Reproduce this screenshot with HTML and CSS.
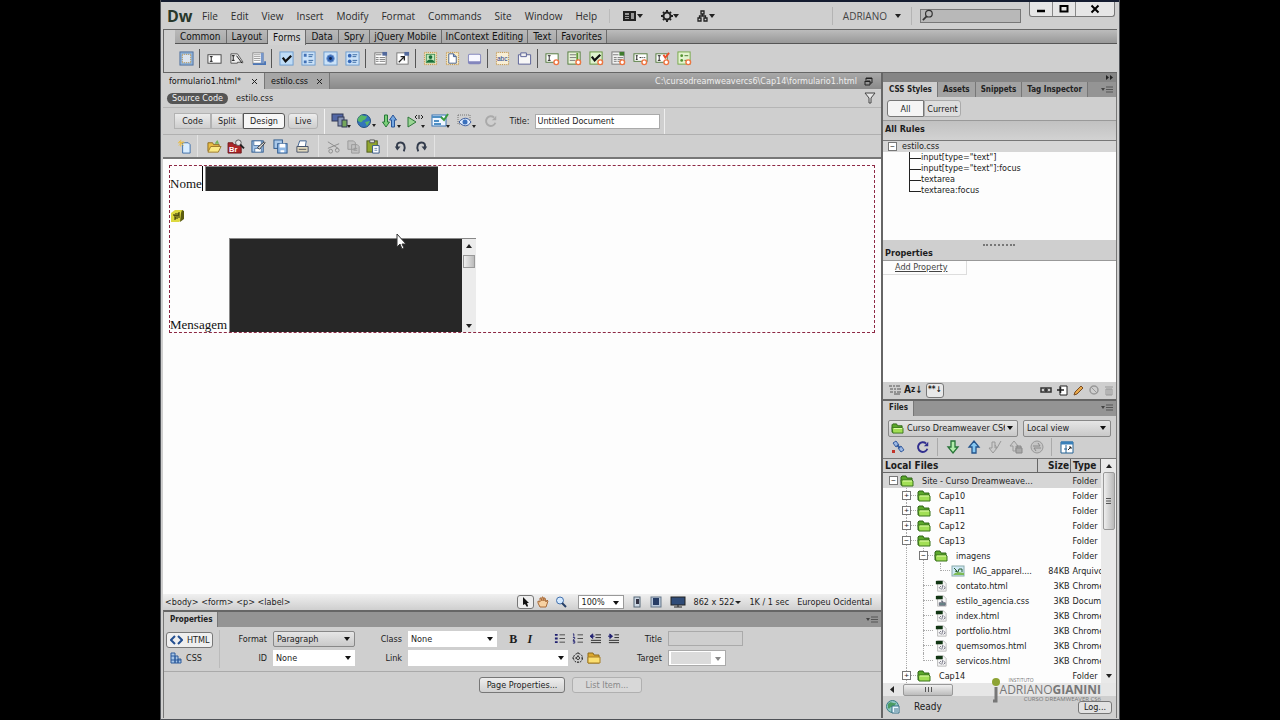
FILE: index.html
```html
<!DOCTYPE html>
<html lang="en">
<head>
<meta charset="utf-8">
<title>Dreamweaver - formulario1.html</title>
<link rel="stylesheet" href="styles.css">
</head>
<body>
<svg class="defs" aria-hidden="true">
  <symbol id="form" viewBox="0 0 16 16"><rect x="1" y="1" width="14" height="14" fill="#8fb4dc" stroke="#4f6f9c"/><rect x="3.500" y="3.500" width="9" height="9" fill="#dce4ee" stroke="#b48a3c" stroke-dasharray="1 1"/></symbol>
  <symbol id="field" viewBox="0 0 16 16"><rect x="1" y="4" width="14" height="9" fill="#fff" stroke="#444"/><path d="M3 6h3M3 11h3M4.500 6v5" stroke="#111" fill="none"/></symbol>
  <symbol id="hidden" viewBox="0 0 16 16"><path d="M2 3h7l6 9H9v1H2z" fill="#eee" stroke="#555"/><path d="M3 5h3M3 10h3M4.500 5v5M8 5l6 8" stroke="#111" fill="none"/></symbol>
  <symbol id="area" viewBox="0 0 16 16"><rect x="2" y="2" width="11" height="11" fill="#fff" stroke="#888"/><path d="M3 4h7M3 6h7M3 8h7M3 10h7" stroke="#9a9a9a"/><path d="M10.500 2h3v11h-3z" fill="#7797cb"/><path d="M2 14h13v-3" stroke="#4a75b7" stroke-width="2" fill="none"/></symbol>
  <symbol id="check" viewBox="0 0 16 16"><rect x="1" y="1" width="14" height="14" fill="#bfdcf6" stroke="#6b9bcd"/><path d="M4 7l3 4 6-6" stroke="#111" stroke-width="2.400" fill="none"/></symbol>
  <symbol id="checks" viewBox="0 0 16 16"><rect x="1" y="1" width="14" height="14" fill="#cbe2f8" stroke="#6b9bcd"/><path d="M3 3h3v3H3zM3 10h3v3H3z" fill="#4170b5"/><path d="M8 4h5M8 6h4M8 10h5M8 12h4" stroke="#3565a0"/></symbol>
  <symbol id="radio" viewBox="0 0 16 16"><rect x="1" y="1" width="14" height="14" fill="#cbe2f8" stroke="#6b9bcd"/><circle cx="8" cy="8" r="4" fill="#3567b6" stroke="#6f94cc"/><circle cx="8" cy="8" r="1.500" fill="#0d2454"/></symbol>
  <symbol id="radios" viewBox="0 0 16 16"><rect x="1" y="1" width="14" height="14" fill="#cbe2f8" stroke="#6b9bcd"/><circle cx="5" cy="5" r="2" fill="#3567b6"/><circle cx="5" cy="11" r="2" fill="#3567b6"/><path d="M8 4h5M8 6h4M8 10h5M8 12h4" stroke="#3565a0"/></symbol>
  <symbol id="menu" viewBox="0 0 16 16"><rect x="2" y="2" width="12" height="12" fill="#fff" stroke="#777"/><path d="M10 1h5v4h-5z" fill="#52699c"/><path d="M3 4h6M3 7h3M7 7h6M3 9h3M7 9h6M3 11h3M7 11h6" stroke="#777"/></symbol>
  <symbol id="jump" viewBox="0 0 16 16"><rect x="2" y="2" width="12" height="12" fill="#fff" stroke="#777"/><path d="M10 1h5v4h-5z" fill="#52699c"/><path d="M4 12l6-6M6 6h4v4" stroke="#222" stroke-width="1.400" fill="none"/></symbol>
  <symbol id="image" viewBox="0 0 16 16"><rect x="1.500" y="1.500" width="13" height="13" fill="#f6e8c0" stroke="#be8a35" stroke-dasharray="1 1"/><rect x="3.500" y="3.500" width="9" height="9" fill="#c4e8bd" stroke="#3f8f58"/><circle cx="8" cy="6.500" r="2" fill="#176c35"/><path d="M4 12c0-4 8-4 8 0z" fill="#18723a"/></symbol>
  <symbol id="file" viewBox="0 0 16 16"><rect x="1.500" y="1.500" width="13" height="13" fill="#f6e8c0" stroke="#be8a35" stroke-dasharray="1 1"/><path d="M4 3h5l3 3v7H4z" fill="#fff" stroke="#46618e"/><path d="M9 3v3h3" fill="#89a6d5" stroke="#46618e"/></symbol>
  <symbol id="button" viewBox="0 0 16 16"><rect x="1" y="3" width="14" height="11" rx="2" fill="#8386bd"/><rect x="2" y="4" width="12" height="7" rx="1" fill="#f7f7ff"/></symbol>
  <symbol id="fieldset" viewBox="0 0 16 16"><path d="M1.500 4h13v10h-13z" fill="#f7f7f7" stroke="#596096"/><path d="M4 2h6v4H4z" fill="#eee" stroke="#596096"/></symbol>
  <symbol id="spfield" viewBox="0 0 16 16"><rect x="1" y="3" width="13" height="9" fill="#fff" stroke="#51793a"/><path d="M3 5h3M3 10h3M4.500 5v5" stroke="#222"/><circle cx="12" cy="12" r="2.500" fill="#fff" stroke="#ee7542" stroke-width="1.500"/></symbol>
  <symbol id="sparea" viewBox="0 0 16 16"><rect x="1" y="1" width="13" height="13" fill="#eaf4db" stroke="#51793a"/><path d="M3 4h7M3 7h7M3 10h6" stroke="#777"/><path d="M11 2v10" stroke="#609a32" stroke-width="2"/><circle cx="12" cy="12" r="2.500" fill="#fff" stroke="#ee7542" stroke-width="1.500"/></symbol>
  <symbol id="spcheck" viewBox="0 0 16 16"><rect x="1" y="1" width="13" height="13" fill="#dff2ce" stroke="#65933f"/><path d="M3 6l3 4 6-6" stroke="#111" stroke-width="2.400" fill="none"/><circle cx="12" cy="12" r="2.500" fill="#fff" stroke="#ee7542" stroke-width="1.500"/></symbol>
  <symbol id="spselect" viewBox="0 0 16 16"><rect x="1" y="1" width="13" height="13" fill="#f2f2f2" stroke="#777"/><path d="M9 1h5v4H9z" fill="#3f7a2d"/><path d="M2 4h6M3 7h3M7 7h6M3 9h3M7 9h5M3 11h3M7 11h3" stroke="#777"/><circle cx="12" cy="12" r="2.500" fill="#fff" stroke="#ee7542" stroke-width="1.500"/></symbol>
  <symbol id="sppass" viewBox="0 0 16 16"><rect x="1" y="3" width="14" height="8" fill="#fff" stroke="#51793a"/><path d="M3 5h2M3 9h2M4 5v4M7 7h2M10 7h1M12 7h1" stroke="#222"/><circle cx="12" cy="12" r="2.500" fill="#fff" stroke="#ee7542" stroke-width="1.500"/></symbol>
  <symbol id="spconf" viewBox="0 0 16 16"><rect x="1" y="3" width="12" height="9" fill="#fff" stroke="#51793a"/><path d="M3 5h3M3 10h3M4.500 5v5" stroke="#222"/><path d="M9 4l2 3 4-5" stroke="#ed4e2a" stroke-width="2" fill="none"/><circle cx="12" cy="12" r="2.500" fill="#fff" stroke="#ee7542" stroke-width="1.500"/></symbol>
  <symbol id="spradio" viewBox="0 0 16 16"><rect x="1" y="1" width="13" height="13" fill="#e4f3cf" stroke="#74a647"/><circle cx="5" cy="5" r="1.500" fill="#549332"/><circle cx="5" cy="10" r="1.500" fill="#549332"/><path d="M8 5h4M8 10h3" stroke="#467a28"/><circle cx="12" cy="12" r="2.500" fill="#fff" stroke="#ee7542" stroke-width="1.500"/></symbol>
  <symbol id="multi" viewBox="0 0 20 16"><rect x="1" y="1" width="11" height="7" fill="#5267a5" stroke="#303957"/><rect x="7" y="4" width="6" height="9" fill="#8b98ba" stroke="#303957"/><rect x="11" y="7" width="5" height="7" fill="#75a65b" stroke="#303957"/><path d="M16 12h4l-2 3z" fill="#222"/></symbol>
  <symbol id="globe" viewBox="0 0 20 16"><circle cx="8" cy="8" r="6.500" fill="#3375bb" stroke="#245080"/><path d="M3 4c3-4 5 0 7-1s0 4-2 4-1 3-4 2-3-2-1-5M9 9l5-1-3 5z" fill="#58b765"/><path d="M16 11h4l-2 3z" fill="#222"/></symbol>
  <symbol id="updown" viewBox="0 0 20 16"><path d="M3.500 2h3v7h2l-3.500 5-3.500-5h2z" fill="#7bcf78" stroke="#277739"/><path d="M10.500 14h3V7h2L12 2 8.500 7h2z" fill="#77a8e0" stroke="#285599"/><path d="M16 12h4l-2 3z" fill="#222"/></symbol>
  <symbol id="valid" viewBox="0 0 20 16"><path d="M2 4l8 5-8 5z" fill="#9bd694" stroke="#2d7539"/><path d="M11 2l-2 2 2 2M15 2l2 2-2 2M13 2v4" stroke="#222" fill="none"/><path d="M15 12h4l-2 3z" fill="#222"/></symbol>
  <symbol id="browser" viewBox="0 0 20 16"><rect x="1" y="2" width="14" height="11" fill="#eef6ff" stroke="#3975b3"/><path d="M1 4h10M3 8h5M3 11h7" stroke="#4f90c5" stroke-width="2"/><path d="M10 4l3 3 4-6" stroke="#3a9a3f" stroke-width="2" fill="none"/><path d="M15 12h4l-2 3z" fill="#222"/></symbol>
  <symbol id="eye" viewBox="0 0 20 16"><path d="M2 2h12v5M2 2v9h3" stroke="#777" stroke-dasharray="1 1" fill="none"/><path d="M3 9c4-5 9-5 12 0-3 5-8 5-12 0z" fill="#dceafd" stroke="#3b5c9d"/><circle cx="9" cy="9" r="2.500" fill="#3970bd"/><path d="M16 12h4l-2 3z" fill="#222"/></symbol>
  <symbol id="reload" viewBox="0 0 16 16"><path d="M13 10a5.500 5.500 0 1 1-1.500-6" stroke="currentColor" stroke-width="2.200" fill="none"/><path d="M9 7h5V2z" fill="currentColor"/></symbol>
  <symbol id="new" viewBox="0 0 16 16"><path d="M6 4h6l2 2v9H6z" fill="#d9edff" stroke="#3e6eaa"/><path d="M4 1v7M1 4h7M2 2l5 5M7 2L2 7" stroke="#eabc42"/></symbol>
  <symbol id="open" viewBox="0 0 16 16"><path d="M1 13V4h5l1 2h6v2" fill="#e9bd44" stroke="#8c6a1d"/><path d="M4 8h11l-3 6H1z" fill="#fbea86" stroke="#9c782b"/><path d="M8 5l3-4 2 4z" fill="#74b459"/></symbol>
  <symbol id="save" viewBox="0 0 16 16"><rect x="1" y="2" width="12" height="12" fill="#a9c8e9" stroke="#29568c"/><path d="M3 2h8v5H3zM4 10h7v4H4z" fill="#fff" stroke="#537ba9"/><path d="M7 9l7-6 1 1-6 7z" fill="#ddd" stroke="#333"/></symbol>
  <symbol id="saveall" viewBox="0 0 16 16"><rect x="1" y="1" width="9" height="9" fill="#a9c8e9" stroke="#29568c"/><rect x="5" y="5" width="10" height="10" fill="#90b8e5" stroke="#29568c"/><path d="M7 5h6v4H7zM8 12h4v2H8z" fill="#fff"/></symbol>
  <symbol id="print" viewBox="0 0 16 16"><path d="M5 2h7l-1 6H3z" fill="#fff" stroke="#3f6290"/><path d="M2 8h12v6H2z" fill="#e0d8bd" stroke="#445068"/><path d="M4 11h8" stroke="#555"/></symbol>
  <symbol id="cut" viewBox="0 0 16 16"><path d="M2 3l11 7M2 10l12-5" stroke="#8b8b8b"/><circle cx="12" cy="12" r="2" fill="none" stroke="#8b8b8b"/><circle cx="5" cy="13" r="2" fill="none" stroke="#8b8b8b"/></symbol>
  <symbol id="copy" viewBox="0 0 16 16"><path d="M2 2h6l2 2v7H2zM6 6h6l2 2v7H6z" fill="#c2c2c2" stroke="#999"/><path d="M8 10h4M8 12h4" stroke="#999"/></symbol>
  <symbol id="paste" viewBox="0 0 16 16"><rect x="1" y="2" width="11" height="12" fill="#91a62f" stroke="#4d5b1e"/><path d="M4 1h5v3H4z" fill="#ddd" stroke="#555"/><path d="M7 7h7v8H7z" fill="#fff" stroke="#345888"/><path d="M9 10h3M9 12h3" stroke="#6688b0"/></symbol>
  <symbol id="undo" viewBox="0 0 16 16"><path d="M12 14C15 8 12 3 8 3S3 6 4 9" stroke="#333c4c" stroke-width="2.400" fill="none"/><path d="M1 8h7l-4 5z" fill="#333c4c"/></symbol>
  <symbol id="redo" viewBox="0 0 16 16"><path d="M4 14C1 8 4 3 8 3s5 3 4 6" stroke="#333c4c" stroke-width="2.400" fill="none"/><path d="M8 8h7l-3 5z" fill="#333c4c"/></symbol>
  <symbol id="folder" viewBox="0 0 14 12"><path d="M1 10V2l1-1h4l1 2h5v7z" fill="#5ba82a" stroke="#2f6517"/><path d="M2 11L1 5h11l1 1v5z" fill="#a2df55" stroke="#38731b"/><path d="M3 6h9" stroke="#e2ffab"/></symbol>
  <symbol id="doc" viewBox="0 0 14 14"><path d="M3 1h7l3 3v9H3z" fill="#f5f5f5" stroke="#b4b4b4"/><path d="M1 1h8v4H1z" fill="#103512"/><path d="M7 7L5 9l2 2M10 7l2 2-2 2M9 6l-1 5" stroke="#667" fill="none"/></symbol>
  <symbol id="css" viewBox="0 0 14 14"><path d="M3 1h7l3 3v9H3z" fill="#f5f5f5" stroke="#b4b4b4"/><path d="M1 1h8v4H1z" fill="#103512"/><path d="M5 9h7v3H5zM7 7h2v2" fill="#688" stroke="#667"/></symbol>
  <symbol id="pic" viewBox="0 0 14 12"><rect x="1" y="1" width="12" height="10" fill="#cfe9f5" stroke="#8aa"/><path d="M2 10l2-2 3-1 6 1v2z" fill="#7dbb56"/><path d="M3 3l3 3M4 6l3 1 1-3h3v3" stroke="#285b31" fill="none"/></symbol>
  <symbol id="panel" viewBox="0 0 12 8"><path d="M0 2h4L2 5z" fill="#444"/><path d="M5 1h7M5 3.500h7M5 6h7" stroke="#555"/></symbol>
  <symbol id="lens" viewBox="0 0 14 14"><circle cx="8.500" cy="5" r="3.600" fill="none" stroke="#333" stroke-width="1.300"/><path d="M6 8l-4 4" stroke="#333" stroke-width="1.800"/></symbol>
  <symbol id="ul" viewBox="0 0 12 12"><path d="M1 1h3v2H1zM1 5h3v2H1zM1 9h3v2H1z" fill="#1f1f70"/><path d="M6 2h6M6 6h6M6 10h6" stroke="#444"/></symbol>
  <symbol id="ol" viewBox="0 0 12 12"><path d="M1 1h1v3M1 5h2v1L1 8h2M1 9h2v2H1" stroke="#1f1f70" fill="none"/><path d="M6 2h6M6 6h6M6 10h6" stroke="#444"/></symbol>
  <symbol id="outdent" viewBox="0 0 12 12"><path d="M6 2h6M6 5h6M1 8h11M1 10.500h11" stroke="#222"/><path d="M0 3.500L3 1v5zM3 3.500h2" fill="#1f1f70" stroke="#1f1f70"/></symbol>
  <symbol id="indent" viewBox="0 0 12 12"><path d="M7 2h5M7 5h5M1 8h11M1 10.500h11" stroke="#222"/><path d="M5 3.500L2 1v5zM0 3.500h2" fill="#1f1f70" stroke="#1f1f70"/></symbol>
  <symbol id="down" viewBox="0 0 14 14"><path d="M5 1h4v6h3l-5 6-5-6h3z" fill="#b1edaa" stroke="#287438" stroke-width="1.300"/></symbol>
  <symbol id="up" viewBox="0 0 14 14"><path d="M5 13h4V7h3L7 1 2 7h3z" fill="#86c8f2" stroke="#24548c" stroke-width="1.300"/></symbol>
</svg>

<div class="app">
  <header class="menubar">
    <strong class="logo">Dw</strong>
    <nav class="menus"><a href="#">File</a><a href="#">Edit</a><a href="#">View</a><a href="#">Insert</a><a href="#">Modify</a><a href="#">Format</a><a href="#">Commands</a><a href="#">Site</a><a href="#">Window</a><a href="#">Help</a></nav>
    <div class="apptools">
      <button aria-label="Layout"><svg width="20" height="12" viewBox="0 0 20 12"><path d="M0 1h13v10H0z" fill="#222"/><path d="M2 3h4v2H2zM2 6h4v1H2zM2 8h4v1H2zM8 3h3v6H8z" fill="#999"/><path d="M14 4h6l-3 4z" fill="#222"/></svg></button>
      <button aria-label="Extend"><svg width="18" height="12" viewBox="0 0 18 12"><circle cx="6" cy="6" r="3.500" fill="none" stroke="#222" stroke-width="2"/><path d="M6 0v2M6 10v2M0 6h2M10 6h2M2 2l1 1M9 9l1 1M2 10l1-1M9 3l1-1" stroke="#222" stroke-width="2"/><path d="M12 4h6l-3 4z" fill="#222"/></svg></button>
      <button aria-label="Site"><svg width="18" height="12" viewBox="0 0 18 12"><path d="M4 1h3v3H4zM1 8h3v3H1zM7 8h3v3H7zM5.500 4v2M2.500 8V6h6v2" fill="none" stroke="#222" stroke-width="1.300"/><path d="M12 4h6l-3 4z" fill="#222"/></svg></button>
    </div>
    <button class="user">ADRIANO <i class="tri"></i></button>
    <label class="search"><svg width="13" height="13"><use href="#lens"/></svg><input type="search" aria-label="Search"></label>
    <div class="winbtns">
      <button aria-label="Minimize"><svg width="10" height="10" viewBox="0 0 10 10"><path d="M1 7h8" stroke="#000" stroke-width="2.500"/></svg></button>
      <button aria-label="Maximize"><svg width="10" height="10" viewBox="0 0 10 10"><path d="M1.500 2h7v5.500h-7z" fill="none" stroke="#000" stroke-width="2"/></svg></button>
      <button class="close" aria-label="Close"><svg width="10" height="10" viewBox="0 0 10 10"><path d="M1.500 1.500l7 7M8.500 1.500l-7 7" stroke="#000" stroke-width="2"/></svg></button>
    </div>
  </header>

  <section class="insert">
    <div class="instabs"><button>Common</button><button>Layout</button><button class="on">Forms</button><button>Data</button><button>Spry</button><button>jQuery Mobile</button><button>InContext Editing</button><button>Text</button><button>Favorites</button></div>
    <div class="insicons">
      <button aria-label="Form"><svg><use href="#form"/></svg></button><i></i>
      <button aria-label="Text Field"><svg><use href="#field"/></svg></button><button aria-label="Hidden Field"><svg><use href="#hidden"/></svg></button><button aria-label="Textarea"><svg><use href="#area"/></svg></button><i></i>
      <button aria-label="Checkbox"><svg><use href="#check"/></svg></button><button aria-label="Checkbox Group"><svg><use href="#checks"/></svg></button><button aria-label="Radio"><svg><use href="#radio"/></svg></button><button aria-label="Radio Group"><svg><use href="#radios"/></svg></button><i></i>
      <button aria-label="Select"><svg><use href="#menu"/></svg></button><button aria-label="Jump Menu"><svg><use href="#jump"/></svg></button><i></i>
      <button aria-label="Image Field"><svg><use href="#image"/></svg></button><button aria-label="File Field"><svg><use href="#file"/></svg></button><button aria-label="Button"><svg><use href="#button"/></svg></button><i></i>
      <button aria-label="Label"><svg viewBox="0 0 16 16"><rect x="1.500" y="1.500" width="13" height="13" fill="#f8eed5" stroke="#be8a35" stroke-dasharray="1 1"/><text x="2" y="11" class="tiny">abc</text></svg></button><button aria-label="Fieldset"><svg><use href="#fieldset"/></svg></button><i></i>
      <button aria-label="Spry Text"><svg><use href="#spfield"/></svg></button><button aria-label="Spry Textarea"><svg><use href="#sparea"/></svg></button><button aria-label="Spry Checkbox"><svg><use href="#spcheck"/></svg></button><button aria-label="Spry Select"><svg><use href="#spselect"/></svg></button><button aria-label="Spry Password"><svg><use href="#sppass"/></svg></button><button aria-label="Spry Confirm"><svg><use href="#spconf"/></svg></button><button aria-label="Spry Radio"><svg><use href="#spradio"/></svg></button>
    </div>
  </section>

  <div class="work">
    <main class="editor">
      <div class="doctabs">
        <button class="on">formulario1.html* <svg width="7" height="7" viewBox="0 0 7 7"><path d="M1 1l5 5M6 1L1 6" stroke="#222"/></svg></button>
        <button>estilo.css <svg width="7" height="7" viewBox="0 0 7 7"><path d="M1 1l5 5M6 1L1 6" stroke="#222"/></svg></button>
        <span class="path">C:\cursodreamweavercs6\Cap14\formulario1.html</span>
        <svg width="9" height="9" viewBox="0 0 9 9"><path d="M2 3V1h6v5H6M1 4h5v4H1zM1 4.500h5M2 1.500h6" fill="none" stroke="#222"/></svg>
      </div>
      <div class="related"><button class="pill">Source Code</button><button>estilo.css</button><svg width="12" height="12" viewBox="0 0 12 12"><path d="M1 1h10L7 6v5H5V6z" fill="#e5e5e5" stroke="#444"/></svg></div>
      <div class="docbar">
        <div class="modes"><button>Code</button><button>Split</button><button class="on">Design</button></div><button class="live">Live</button>
        <div class="docicons"><button aria-label="Multiscreen"><svg><use href="#multi"/></svg></button><button aria-label="Preview"><svg><use href="#globe"/></svg></button><button aria-label="File Management"><svg><use href="#updown"/></svg></button><button aria-label="Validate"><svg><use href="#valid"/></svg></button><button aria-label="Browser Check"><svg><use href="#browser"/></svg></button><button aria-label="Visual Aids"><svg><use href="#eye"/></svg></button><button class="faded" aria-label="Refresh"><svg><use href="#reload"/></svg></button></div>
        <label class="doctitle">Title: <input type="text" value="Untitled Document"></label>
      </div>
      <div class="stdbar">
        <div class="g1"><button aria-label="New"><svg><use href="#new"/></svg></button></div>
        <div class="g2"><button aria-label="Open"><svg><use href="#open"/></svg></button><button aria-label="Browse in Bridge"><svg class="wide" viewBox="0 0 20 16"><path d="M1 4h5l1 2h8v9H1z" fill="#ad2528" stroke="#6d171b"/><text x="2" y="14" class="br">Br</text><circle cx="12" cy="4" r="3" fill="#e6e6e6" stroke="#555"/><path d="M14 6l4 4" stroke="#222" stroke-width="2"/></svg></button><button aria-label="Save"><svg><use href="#save"/></svg></button><button aria-label="Save All"><svg><use href="#saveall"/></svg></button><button aria-label="Print"><svg><use href="#print"/></svg></button></div>
        <div class="g3"><button aria-label="Cut"><svg><use href="#cut"/></svg></button><button aria-label="Copy"><svg><use href="#copy"/></svg></button><button aria-label="Paste"><svg><use href="#paste"/></svg></button></div>
        <div class="g4"><button aria-label="Undo"><svg><use href="#undo"/></svg></button><button aria-label="Redo"><svg><use href="#redo"/></svg></button></div>
      </div>
      <div class="canvas">
        <form class="design">
          <p class="line"><label for="nome">Nome</label><span class="caret"></span><input id="nome" type="text"></p>
          <svg class="script" width="14" height="13" viewBox="0 0 14 13"><path d="M1 4l4-3h8v9l-4 3H1z" fill="#ddd940"/><path d="M12 1l2 1v8l-4 3 1-9z" fill="#5b5c10"/><path d="M3 6h2v5M6 4v3h2V4M9 3v6M5 9h3" stroke="#252500" fill="none"/></svg>
          <p class="line msg"><label for="msg">Mensagem</label><span class="box"><textarea id="msg"></textarea><span class="tscroll"><i class="tri upw"></i><b></b><i class="tri"></i></span></span></p>
        </form>
        <svg class="pointer" width="12" height="18" viewBox="0 0 12 18"><path d="M1 1v13l3-3 2 5 2-1-2-4h4z" fill="#fff" stroke="#333"/></svg>
      </div>
      <div class="status">
        <nav><a href="#">&lt;body&gt;</a> <a href="#">&lt;form&gt;</a> <a href="#">&lt;p&gt;</a> <a href="#">&lt;label&gt;</a></nav>
        <div class="sttools">
          <button class="on" aria-label="Select"><svg width="10" height="12" viewBox="0 0 10 12"><path d="M3 1v8l2-1 2 3 1-1-1-3h2z" fill="#111"/></svg></button>
          <button aria-label="Hand"><svg width="12" height="12" viewBox="0 0 12 12"><path d="M3 11L1 7V5l2 1V2h1l1 3V1h1l1 4V2h1l1 4 1-2 1 1-2 6z" fill="#f7d1a2" stroke="#a96b38"/></svg></button>
          <button aria-label="Zoom"><svg width="12" height="12" viewBox="0 0 12 12"><circle cx="5" cy="4.500" r="3.500" fill="#d5eaff" stroke="#416fac"/><path d="M7 7l4 4" stroke="#263f66" stroke-width="2"/></svg></button>
        </div>
        <span class="sel zoom"><select aria-label="Zoom level"><option>100%</option></select></span>
        <div class="screens"><button aria-label="Phone"><svg width="10" height="12" viewBox="0 0 10 12"><rect x="2" y="1" width="6" height="10" fill="#cdd8e4" stroke="#567"/><path d="M4 3h3v5H4z" fill="#334"/></svg></button><button aria-label="Tablet"><svg width="12" height="12" viewBox="0 0 12 12"><rect x="1" y="1" width="10" height="10" fill="#b8c7da" stroke="#678"/><rect x="3" y="2" width="6" height="7" fill="#263c65"/></svg></button><button aria-label="Desktop"><svg width="16" height="12" viewBox="0 0 16 12"><rect x="1" y="1" width="14" height="8" fill="#304c78" stroke="#222"/><path d="M4 11h8M8 9v2" stroke="#222"/></svg></button></div>
        <span>862 x 522<i class="tri s"></i></span><span>1K / 1 sec</span><span>Europeu Ocidental</span>
      </div>

      <section class="props">
        <div class="ptabs"><button class="on">Properties</button><svg width="12" height="8"><use href="#panel"/></svg></div>
        <div class="pbody">
          <div class="pmode">
            <button class="on"><svg width="13" height="10" viewBox="0 0 13 10"><path d="M5 1L1 5l4 4M8 1l4 4-4 4" stroke="#234f91" stroke-width="2" fill="none"/></svg>HTML</button>
            <button><svg width="12" height="12" viewBox="0 0 12 12"><path d="M1 1h4v10H1zM5 4h3v7H5zM8 7h3v4H8zM1 4h4M1 8h10" fill="#a6c5e7" stroke="#2d5b9b"/></svg>CSS</button>
          </div>
          <div class="pg a"><label for="fmt">Format</label><span class="sel gray"><select id="fmt"><option>Paragraph</option></select></span><label for="pid">ID</label><span class="sel"><select id="pid"><option>None</option></select></span></div>
          <div class="pg b"><label for="cls">Class</label>
            <div class="cell"><span class="sel cls"><select id="cls"><option>None</option></select></span><button class="serif"><b>B</b></button><button class="serif"><b><i>I</i></b></button><span class="lists"><button aria-label="Unordered List"><svg><use href="#ul"/></svg></button><button aria-label="Ordered List"><svg><use href="#ol"/></svg></button><button aria-label="Outdent"><svg><use href="#outdent"/></svg></button><button aria-label="Indent"><svg><use href="#indent"/></svg></button></span></div>
            <label for="lnk">Link</label>
            <div class="cell"><span class="sel lnk"><input id="lnk" type="text"></span><button class="tgt" aria-label="Point to File"><svg width="12" height="12" viewBox="0 0 12 12"><circle cx="6" cy="6" r="4.500" fill="none" stroke="#222" stroke-dasharray="2 1"/><path d="M6 0v12M0 6h12" stroke="#444" stroke-dasharray="2 1"/><circle cx="6" cy="6" r="1.500" fill="#eee" stroke="#333"/></svg></button><button aria-label="Browse for File"><svg width="14" height="12" viewBox="0 0 14 12"><path d="M1 1h5l1 2h5v8H1z" fill="#dca82f" stroke="#8c6a1d"/><path d="M1 5h12v6H1z" fill="#fbdf70" stroke="#a87f24"/></svg></button></div>
          </div>
          <div class="pg c"><label for="ttl">Title</label><input id="ttl" type="text" disabled><label for="tgt">Target</label><span class="sel dis"><select id="tgt" disabled><option></option></select></span></div>
        </div>
        <div class="pfoot"><button>Page Properties...</button><button disabled>List Item...</button></div>
      </section>
    </main>

    <aside class="side">
      <div class="dockhead"><svg width="7" height="5" viewBox="0 0 7 5"><path d="M0 0l3 2.500L0 5zM4 0l3 2.500L4 5z" fill="#222"/></svg></div>
      <section class="csspanel">
        <div class="ptabs"><button class="on">CSS Styles</button><button>Assets</button><button>Snippets</button><button>Tag Inspector</button><svg width="12" height="8"><use href="#panel"/></svg></div>
        <div class="allcur"><button class="on">All</button><button>Current</button></div>
        <h2 class="first">All Rules</h2>
        <div class="rules">
          <div class="root"><button class="exp" aria-label="Collapse">−</button>estilo.css</div>
          <ul><li>input[type="text"]</li><li>input[type="text"]:focus</li><li>textarea</li><li>textarea:focus</li></ul>
        </div>
        <h2 class="split">Properties</h2>
        <div class="cssprops"><a href="#">Add Property</a></div>
        <div class="cssfoot">
          <button aria-label="Category view"><svg width="13" height="10" viewBox="0 0 13 10"><path d="M1 1h3M2 4h3M2 7h3M5 1h2M8 1h4M6 4h2M9 4h4M6 7h2M9 7h4M6 9h6" stroke="#555"/></svg></button>
          <button class="az" aria-label="List view">A<small>z</small>↓</button><button class="az on" aria-label="Set properties">**↓</button>
          <span class="r"><button aria-label="Attach"><svg width="12" height="10" viewBox="0 0 12 10"><path d="M1 3h5v4H1zM6 3h5v4H6zM4 5h4" fill="none" stroke="#333" stroke-width="1.500"/></svg></button><button aria-label="New rule"><svg width="11" height="11" viewBox="0 0 11 11"><path d="M3 1h7v9H3z" fill="#fff" stroke="#222"/><path d="M0 5h7M3.500 2v6" stroke="#222" stroke-width="1.500"/></svg></button><button aria-label="Edit"><svg width="11" height="11" viewBox="0 0 11 11"><path d="M1 10l1-3 6-6 2 2-6 6z" fill="#e8a84b" stroke="#774c24"/></svg></button><button aria-label="Disable"><svg width="10" height="10" viewBox="0 0 10 10"><circle cx="5" cy="5" r="4" fill="none" stroke="#999" stroke-width="1.500"/><path d="M2 2l6 6" stroke="#999"/></svg></button><button aria-label="Delete"><svg width="10" height="11" viewBox="0 0 10 11"><path d="M1 2h8M2 4h6v6H2zM4 4v6M6 4v6" fill="none" stroke="#999"/></svg></button></span>
        </div>
      </section>
      <section class="files">
        <div class="ptabs"><button class="on">Files</button><svg width="12" height="8"><use href="#panel"/></svg></div>
        <div class="fsel"><span class="sel gray site"><svg width="13" height="11"><use href="#folder"/></svg><select aria-label="Site"><option>Curso Dreamweaver CS6</option></select></span><span class="sel gray view"><select aria-label="View"><option>Local view</option></select></span></div>
        <div class="ftools">
          <button aria-label="Connect"><svg viewBox="0 0 14 14"><path d="M2 3l3-2 3 4-3 2zM7 8l3-2 3 4-3 2z" fill="#9bb8e4" stroke="#345b9d"/><path d="M6 5l3 3" stroke="#345b9d" stroke-width="2"/><path d="M1 10h3v3H1z" fill="#c33329"/></svg></button>
          <button class="blue" aria-label="Refresh"><svg><use href="#reload"/></svg></button><i></i>
          <button aria-label="Get"><svg><use href="#down"/></svg></button><button aria-label="Put"><svg><use href="#up"/></svg></button>
          <button aria-label="Check out"><svg viewBox="0 0 14 14"><path d="M4 2h3v6h2l-4 5-4-5h3zM7 5l2 3 4-7" fill="#ccc" stroke="#999"/></svg></button>
          <button aria-label="Check in"><svg viewBox="0 0 14 14"><path d="M4 11h3V6h2L5 1 1 6h3z" fill="#ccc" stroke="#999"/><path d="M7 8h6v5H7zM8 8V6h4v2" fill="#aaa" stroke="#888"/></svg></button>
          <button aria-label="Synchronize"><svg viewBox="0 0 14 14"><circle cx="7" cy="7" r="6" fill="#c5c5c5" stroke="#999"/><path d="M3 6h7L8 3M11 8H4l2 3" stroke="#888" fill="none"/></svg></button><i></i>
          <button aria-label="Expand"><svg viewBox="0 0 14 14"><path d="M1 2h12v11H1z" fill="#fff" stroke="#246294"/><path d="M1 3h12" stroke="#3980ba" stroke-width="3"/><path d="M6 5v8M4 9h3" stroke="#246294"/><path d="M8 10l3-3M9 7h2v2" stroke="#222" fill="none"/></svg></button>
        </div>
        <div class="flist">
          <table>
            <colgroup><col><col class="c2"><col class="c3"></colgroup>
            <thead><tr><th>Local Files</th><th>Size</th><th>Type</th></tr></thead>
            <tbody>
              <tr class="on"><td><div class="n root"><button class="exp">−</button><svg><use href="#folder"/></svg>Site - Curso Dreamweave...</div></td><td></td><td>Folder</td></tr>
              <tr><td><div class="n"><span class="node"><button class="exp">+</button></span><svg><use href="#folder"/></svg>Cap10</div></td><td></td><td>Folder</td></tr>
              <tr><td><div class="n"><span class="node"><button class="exp">+</button></span><svg><use href="#folder"/></svg>Cap11</div></td><td></td><td>Folder</td></tr>
              <tr><td><div class="n"><span class="node"><button class="exp">+</button></span><svg><use href="#folder"/></svg>Cap12</div></td><td></td><td>Folder</td></tr>
              <tr><td><div class="n"><span class="node"><button class="exp">−</button></span><svg><use href="#folder"/></svg>Cap13</div></td><td></td><td>Folder</td></tr>
              <tr><td><div class="n"><span class="ind"></span><span class="node"><button class="exp">−</button></span><svg><use href="#folder"/></svg>imagens</div></td><td></td><td>Folder</td></tr>
              <tr><td><div class="n"><span class="ind"></span><span class="ind"></span><span class="node last"></span><svg><use href="#pic"/></svg>IAG_apparel....</div></td><td>84KB</td><td>Arquivo</td></tr>
              <tr><td><div class="n"><span class="ind"></span><span class="node"></span><svg><use href="#doc"/></svg>contato.html</div></td><td>3KB</td><td>Chrome</td></tr>
              <tr><td><div class="n"><span class="ind"></span><span class="node"></span><svg><use href="#css"/></svg>estilo_agencia.css</div></td><td>3KB</td><td>Docum</td></tr>
              <tr><td><div class="n"><span class="ind"></span><span class="node"></span><svg><use href="#doc"/></svg>index.html</div></td><td>3KB</td><td>Chrome</td></tr>
              <tr><td><div class="n"><span class="ind"></span><span class="node"></span><svg><use href="#doc"/></svg>portfolio.html</div></td><td>3KB</td><td>Chrome</td></tr>
              <tr><td><div class="n"><span class="ind"></span><span class="node"></span><svg><use href="#doc"/></svg>quemsomos.html</div></td><td>3KB</td><td>Chrome</td></tr>
              <tr><td><div class="n"><span class="ind"></span><span class="node last"></span><svg><use href="#doc"/></svg>servicos.html</div></td><td>3KB</td><td>Chrome</td></tr>
              <tr><td><div class="n"><span class="node"><button class="exp">+</button></span><svg><use href="#folder"/></svg>Cap14</div></td><td></td><td>Folder</td></tr>
            </tbody>
          </table>
          <div class="vscroll"><i class="tri upw"></i><b><svg width="5" height="6" viewBox="0 0 5 6"><path d="M0 .5h5M0 3h5M0 5.500h5" stroke="#555"/></svg></b><i class="tri"></i></div>
        </div>
        <div class="hscroll"><svg width="4" height="7" viewBox="0 0 4 7"><path d="M4 0v7L0 3.500z" fill="#222"/></svg><b><svg width="7" height="5" viewBox="0 0 7 5"><path d="M.5 0v5M3.500 0v5M6.500 0v5" stroke="#555"/></svg></b></div>
        <div class="ffoot"><svg width="14" height="14" viewBox="0 0 14 14"><circle cx="6.500" cy="6.500" r="6" fill="#8fc7c3" stroke="#3c7c86"/><path d="M2 4c3-4 5 0 7-1s0 4-3 4-2 3-4 1z" fill="#4a9b61"/><path d="M6 6h7v7H6z" fill="#e9f7ff" stroke="#367187"/><path d="M8 9h4M8 11h4" stroke="#367187"/></svg><span>Ready</span><button>Log...</button></div>
        <div class="brand"><svg width="8" height="25" viewBox="0 0 8 25"><circle cx="4" cy="4" r="4" fill="#8da334"/><path d="M4 9v14H1" stroke="#777" stroke-width="3" fill="none"/></svg><div><small>INSTITUTO</small><p>ADRIANO<b>GIANINI</b></p><em>CURSO DREAMWEAVER CS6</em></div></div>
      </section>
    </aside>
  </div>
</div>
</body>
</html>
```
FILE: styles.css
```css
* { box-sizing: border-box; }
body { margin: 0; background: #000; color: #1c1c1c; font: 9px/12px "DejaVu Sans Condensed", "Liberation Sans", sans-serif; }
button, input, select, textarea { font: inherit; color: inherit; margin: 0; padding: 0; border: 0; background: none; border-radius: 0; outline: 0; }
button { display: inline-flex; align-items: center; justify-content: center; white-space: nowrap; }
a { color: inherit; text-decoration: none; }
p, h2, ul { margin: 0; padding: 0; }
svg { display: block; flex: none; }
.defs { position: absolute; width: 0; height: 0; }
.tiny { font: 7px "Liberation Sans", sans-serif; fill: #233f90; }
.br { font: bold 8px "Liberation Sans", sans-serif; fill: #fff; }
.tri { display: inline-block; border: 3px solid transparent; border-top: 4px solid #222; border-bottom: 0; }
.tri.upw { border-top: 0; border-bottom: 4px solid #222; }
.tri.s { margin-left: 1px; border-top-width: 3px; vertical-align: 1px; }

.app { width: 75%; height: 100vh; min-height: 720px; margin: 0 auto; display: flex; flex-direction: column; background: #cfcfcf; border: solid #4f5257; border-width: 0 1px 1px; padding: 0 2px 1px; }

.menubar { display: flex; align-items: center; height: 29px; border-top: 2px solid #141c30; margin: 0 -2px; padding: 0 4px 0 6px; font: 10px/14px "Open Sans", "Noto Sans", sans-serif; color: #2c2c2c; }
.logo { font: bold 16px/20px "Open Sans", sans-serif; color: #28382b; width: 35px; }
.menus { display: flex; gap: 13px; padding-right: 12px; border-right: 1px solid #bbb; }
.apptools { display: flex; gap: 18px; padding-left: 13px; }
.user { margin-left: auto; padding: 2px 10px; gap: 8px; border: solid #b4b4b4; border-width: 0 1px; color: #444; }
.search { display: flex; align-items: center; width: 101px; height: 14px; margin: 0 8px; background: #b8b8b8; border: 1px solid #777; }
.search input { width: 100%; min-width: 0; }
.winbtns { display: flex; align-self: flex-start; height: 15px; background: #e6e6e6; border: 1px solid #777; border-top: 0; border-radius: 0 0 3px 3px; }
.winbtns button { width: 23px; border-right: 1px solid #888; }
.winbtns .close { width: 38px; border: 0; }

.insert { border: 1px solid #666; border-width: 1px 0 0 1px; background: #cfcfcf; padding-left: 11px; }
.instabs { display: flex; height: 14px; background: linear-gradient(#bcbcbc, #989898); border-bottom: 1px solid #555; }
.instabs button { padding: 0 5px; border-right: 1px solid #6c6c6c; background: linear-gradient(#b9b9b9, #a8a8a8); font-size: 10px; color: #111; min-width: 29px; }
.instabs button:nth-child(n+6) { padding: 0 4px; }
.instabs .on { height: 15px; background: #d2d2d2; }
.insicons { display: flex; align-items: center; height: 28px; }
.insicons button { width: 22px; height: 20px; }
.insicons svg { width: 15px; height: 15px; }
.insicons i { width: 1px; height: 19px; margin: 0 3px 0 2px; background: #555; }

.work { flex: 1; min-height: 0; display: flex; border-top: 1px solid #666; }
.editor { flex: 1; min-width: 0; display: flex; flex-direction: column; border-right: 2px solid #666; }
.doctabs { display: flex; align-items: center; height: 16px; background: linear-gradient(#a9a9a9, #898989); padding-right: 8px; }
.doctabs button { height: 16px; padding: 0 6px; gap: 8px; background: #a6a6a6; border-right: 1px solid #777; color: #111; }
.doctabs .on { background: #cfcfcf; gap: 10px; }
.path { margin-left: auto; padding-right: 7px; color: #eee; }
.related { display: flex; align-items: center; gap: 8px; height: 19px; padding: 0 5px 0 4px; border-bottom: 1px solid #b5b5b5; }
.related svg { margin-left: auto; }
.pill { height: 11px; padding: 0 5px; border-radius: 6px; background: #555; color: #f2f2f2; }
.docbar { display: flex; align-items: center; height: 27px; padding-left: 11px; border-bottom: 1px solid #b0b0b0; }
.modes { display: flex; }
.modes button, .live { height: 16px; padding: 0 6px; background: linear-gradient(#ececec, #cecece); border: 1px solid #b2b2b2; }
.modes button:first-child { min-width: 37px; }
.modes .on { background: #f7f7f7; border-color: #555; border-radius: 0 3px 3px 0; }
.live { margin-left: 3px; border-radius: 3px; }
.docicons { display: flex; height: 25px; margin-left: 6px; border-left: 1px solid #f2f2f2; padding-left: 3px; }
.docicons button { width: 25px; }
.docicons svg { width: 20px; height: 16px; }
.faded { color: #aaa; }
.docicons .faded svg { width: 14px; height: 14px; }
.doctitle { display: flex; align-items: center; gap: 5px; height: 25px; padding: 0 4px 0 6px; border-right: 1px solid #eee; }
.doctitle input { width: 125px; height: 15px; padding: 0 2px; background: #fff; border: 1px solid #aaa; }
.stdbar { display: flex; height: 22px; padding-left: 10px; }
.stdbar > div { display: flex; padding: 0 5px; border-right: 1px solid #e3e3e3; }
.stdbar svg { width: 15px; height: 15px; }
.stdbar svg.wide { width: 19px; }
.stdbar button { width: 22px; }
.stdbar .g1 { padding: 0 2px 0 0; }
.stdbar .g3 { padding: 0 4px; }
.stdbar .g3 button { width: 20px; }
.stdbar .g4 button { width: 21px; }
.stdbar .g4 { padding: 0 2px; }
.stdbar .g4 svg { width: 13px; height: 13px; }

.canvas { flex: 1; min-height: 0; position: relative; background: #fdfdfd; border-top: 2px solid #777; padding: 6px; font: 13px/15px "Liberation Serif", serif; color: #111; }
.design { border: 1px dashed #8d2844; }
.line { display: flex; align-items: flex-end; }
.caret { width: 1px; height: 25px; background: #000; }
.design input { width: 233px; height: 25px; margin-left: 2px; background: #272727; border: 1px solid #888; border-width: 1px 0 0 1px; }
.script { margin: 18px 0 16px; }
.box { display: flex; width: 247px; height: 94px; margin-left: 2px; border: 1px solid #888; border-width: 1px 0 0 1px; }
.box textarea { flex: 1; background: #272727; resize: none; min-width: 0; }
.tscroll { width: 14px; padding: 5px 0 4px; display: flex; flex-direction: column; align-items: center; background: #ececec; }
.tscroll b { width: 12px; height: 13px; margin: 7px 0 auto; background: linear-gradient(90deg, #eee, #bbb); border: 1px solid #999; }
.pointer { position: absolute; left: 233px; top: 74px; }

.status { display: flex; align-items: center; height: 16px; padding: 0 9px 0 2px; gap: 8px; background: linear-gradient(#f0f0f0, #cfcfcf); }
.status nav { margin-right: auto; white-space: nowrap; }
.sttools { display: flex; gap: 1px; }
.sttools button { width: 17px; height: 14px; }
.sttools .on { border: 1px solid #777; border-radius: 3px; background: #eee; }
.status span { white-space: nowrap; }
.screens { display: flex; gap: 8px; }

.sel { position: relative; display: flex; align-items: center; background: #fff; height: 16px; padding-left: 2px; }
.sel::after { content: ""; position: absolute; right: 4px; top: 6px; border: 3px solid transparent; border-top: 4px solid #111; border-bottom: 0; pointer-events: none; }
.sel select, .sel input { appearance: none; width: 100%; min-width: 0; height: 100%; padding: 0 12px 0 1px; }
.sel.gray { border: 1px solid #888; border-radius: 2px; background: linear-gradient(#e6e6e6, #c9c9c9); }
.sel.gray::after { top: 5px; }
.status .zoom { width: 46px; height: 14px; border: 1px solid #999; }
.zoom::after { top: 5px; }

.ptabs { display: flex; align-items: center; height: 15px; background: #949494; padding-right: 3px; }
.ptabs button { height: 15px; padding: 0 5px; font-size: 8px; font-weight: bold; background: #a3a3a3; border-right: 1px solid #777; color: #222; }
.ptabs .on { background: #cfcfcf; padding-left: 6px; }
.ptabs svg { margin-left: auto; }

.props { height: 108px; border-top: 2px solid #666; border-left: 1px solid #777; background: #cfcfcf; }
.pbody { display: flex; height: 45px; padding: 3px 2px; border-bottom: 1px solid #aaa; }
.pmode { display: flex; flex-direction: column; gap: 2px; width: 54px; padding: 2px 6px 0 0; border-right: 1px solid #bbb; }
.pmode button { height: 16px; gap: 4px; padding: 0 3px; border: 1px solid transparent; justify-content: flex-start; }
.pmode .on { border-color: #777; border-radius: 3px; background: #efefef; }
.pg { display: grid; grid-template-rows: 17px 17px; row-gap: 2px; column-gap: 6px; align-items: center; justify-items: end; }
.a { grid-template-columns: 47px 82px; }
.b { grid-template-columns: 40px auto; margin-left: 7px; }
.c { grid-template-columns: 40px 75px; }
.pg .sel { width: 100%; justify-self: start; }
.cell { display: flex; align-items: center; width: 214px; }
.pg .cls { width: 89px; flex: none; }
.pg .lnk { width: 160px; flex: none; }
.serif { width: 18px; font: 12px/14px "Liberation Serif", serif; }
.cls + .serif { margin-left: 8px; }
.lists { display: flex; margin-left: 12px; }
.lists button { width: 18px; }
.lists svg { width: 11px; height: 11px; }
.tgt { margin: 0 3px 0 4px; }
.c input { width: 75px; height: 15px; border: 1px solid #aaa; justify-self: start; }
.pg .dis { width: 58px; border: 1px solid #aaa; }
.dis select { width: 40px; height: 12px; background: #ccc; }
.dis::after { border-top-color: #888; }
.pfoot { display: flex; gap: 7px; padding-top: 5px; margin-left: 315px; }
.pfoot button { width: 86px; height: 16px; background: linear-gradient(#eee, #d0d0d0); border: 1px solid #777; border-radius: 3px; }
.pfoot button:disabled { width: 70px; color: #888; border-color: #b0b0b0; background: #d8d8d8; }

.side { width: 234px; flex: none; display: flex; flex-direction: column; border-right: 1px solid #777; }
.dockhead { display: flex; align-items: center; justify-content: flex-end; height: 9px; padding-right: 3px; background: #858585; }
.csspanel { flex: 1; min-height: 0; display: flex; flex-direction: column; }
.allcur { display: flex; height: 24px; padding: 3px 4px; border-bottom: 1px solid #999; }
.allcur button { width: 37px; height: 17px; background: #dedede; border: 1px solid #aaa; border-radius: 0 3px 3px 0; }
.allcur .on { border-color: #777; border-radius: 3px 0 0 3px; background: #f5f5f5; }
h2 { font-size: 9px; line-height: 17px; height: 19px; padding-left: 2px; background: linear-gradient(#c1c1c1, #d2d2d2); }
.rules { height: 100px; background: #fdfdfd; border-top: 1px solid #777; line-height: 11px; }
.root { display: flex; align-items: center; }
.rules .root { height: 11px; padding-left: 5px; gap: 5px; background: #d6d6d6; }
.exp { width: 9px; height: 9px; border: 1px solid #777; background: #fff; font: 8px/7px "Liberation Sans", sans-serif; flex: none; }
.rules ul { list-style: none; margin-left: 26px; }
.rules li { position: relative; height: 11px; padding-left: 12px; }
.rules li::before { content: ""; position: absolute; left: 0; top: 0; width: 11px; height: 6px; border: solid #222; border-width: 0 0 1px 1px; }
.rules li:not(:last-child)::after { content: ""; position: absolute; left: 0; top: 0; height: 11px; border-left: 1px solid #222; }
.split { position: relative; line-height: 26px; height: 21px; background: #cfcfcf; border-bottom: 1px solid #999; }
.split::before { content: ""; position: absolute; left: 100px; top: 4px; width: 32px; border-top: 2px dotted #777; }
.cssprops { flex: 1; background: #fdfdfd; }
.cssprops a { display: block; width: 84px; height: 14px; padding: 0 12px; border: solid #ddd; border-width: 0 1px 1px 0; text-decoration: underline; color: #444; }
.cssfoot { display: flex; align-items: center; height: 17px; padding: 0 2px 0 5px; gap: 3px; }
.az { font-weight: bold; font-size: 10px; min-width: 18px; }
.az small { font-size: 8px; }
.az.on { border: 1px solid #777; border-radius: 3px; background: #e8e8e8; height: 15px; font-size: 8px; }
.cssfoot .r { display: flex; margin-left: auto; gap: 5px; }

.files { position: relative; border-top: 2px solid #666; }
.fsel { display: flex; gap: 5px; padding: 4px 5px 0; }
.site { flex: 3; gap: 2px; }
.fsel .view { flex: 2; }
.fsel .sel { height: 17px; min-width: 0; }
.ftools { display: flex; align-items: center; height: 21px; padding-left: 4px; }
.ftools button { width: 21px; }
.ftools button:nth-child(2) { margin-left: 4px; }
.ftools svg { width: 14px; height: 14px; }
.ftools i { width: 1px; height: 18px; margin: 0 4px; background: #aaa; }
.blue { color: #302e8e; }
.flist { display: flex; background: #fdfdfd; border-top: 1px solid #777; }
table { flex: 1; width: 0; table-layout: fixed; border-collapse: collapse; }
.c2 { width: 33px; }
.c3 { width: 30px; }
th { height: 14px; padding: 0 2px; text-align: left; font-size: 10px; line-height: 13px; background: #cfcfcf; border: solid #666; border-width: 0 1px 1px 0; overflow: hidden; }
th:nth-child(2) { text-align: right; padding: 0 1px; }
td { height: 15px; padding: 0 2px; overflow: hidden; white-space: nowrap; line-height: 14px; }
td:first-child { padding: 0; overflow: visible; }
td:nth-child(2) { text-align: right; padding: 0 1px 0 0; overflow: visible; }
tr.on { background: #d6d6d6; }
.n { display: flex; align-items: center; height: 15px; padding-left: 19px; }
.n.root { padding-left: 6px; gap: 2px; }
.n svg { width: 14px; height: 12px; margin-right: 8px; }
.n.root svg { margin-right: 6px; }
.ind { width: 17px; height: 15px; position: relative; }
.ind::before, .node::before { content: ""; position: absolute; left: 4px; top: 0; height: 15px; border-left: 1px dotted #aaa; }
.node { position: relative; width: 15px; height: 15px; display: flex; align-items: center; }
.node::after { content: ""; position: absolute; left: 4px; right: 1px; top: 7px; border-top: 1px dotted #aaa; }
.node.last::before { height: 8px; }
.node .exp { position: relative; z-index: 1; }
.vscroll { width: 15px; display: flex; flex-direction: column; align-items: center; padding: 5px 0; background: #e9e9e9; }
.vscroll b, .hscroll b { display: flex; align-items: center; justify-content: center; border: 1px solid #999; border-radius: 2px; }
.vscroll b { width: 12px; height: 58px; margin: 4px 0 auto; background: linear-gradient(90deg, #eee, #b9b9b9); }
.hscroll { display: flex; align-items: center; gap: 9px; height: 13px; padding-left: 7px; background: #e6e6e6; }
.hscroll b { width: 50px; height: 12px; background: linear-gradient(#efefef, #bcbcbc); }
.ffoot { display: flex; align-items: center; height: 22px; padding: 0 4px 0 3px; gap: 14px; font-size: 10px; }
.ffoot button { margin-left: auto; width: 34px; height: 13px; background: #e2e2e2; border: 1px solid #777; border-radius: 3px; font-size: 9px; }
.brand { position: absolute; right: 15px; bottom: 15px; display: flex; align-items: flex-end; color: #777; pointer-events: none; white-space: nowrap; }
.brand small { display: block; font: 5px/7px "Open Sans", sans-serif; padding-left: 9px; }
.brand p { font: 12px/12px "Open Sans", sans-serif; }
.brand em { display: block; text-align: right; font: normal 6px/7px "Open Sans", sans-serif; }
```
